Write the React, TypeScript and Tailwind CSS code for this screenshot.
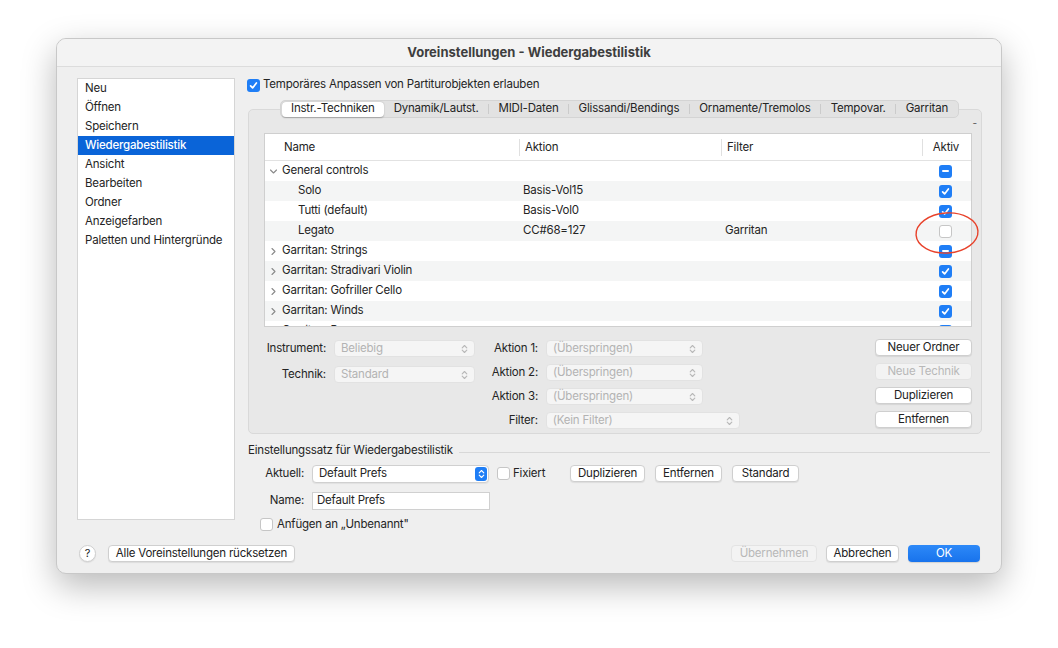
import React from "react";

type CheckState = "on" | "off" | "mixed";

function Check({ state }: { state: CheckState }) {
  if (state === "off")
    return <span className="block w-[13px] h-[13px] rounded-[3px] border border-[#c6c6c6] bg-white" />;
  return (
    <span className="flex w-[13px] h-[13px] rounded-[3px] bg-[#1f7ef6] items-center justify-center">
      {state === "on" ? (
        <svg width="11" height="11" viewBox="0 0 11 11">
          <path d="M2.6 5.8 L4.6 7.9 L8.4 3" fill="none" stroke="white" strokeWidth="1.7" strokeLinecap="round" strokeLinejoin="round" />
        </svg>
      ) : (
        <span className="block w-[7px] h-[2px] bg-white rounded-full" />
      )}
    </span>
  );
}

function Stepper({ color = "#b8b8b8" }: { color?: string }) {
  return (
    <svg width="7" height="10" viewBox="0 0 7 10">
      <path d="M1.2 3.8 L3.5 1.5 L5.8 3.8 M1.2 6.2 L3.5 8.5 L5.8 6.2" fill="none" stroke={color} strokeWidth="1.1" strokeLinecap="round" strokeLinejoin="round" />
    </svg>
  );
}

function Popup({ text, w }: { text: string; w: string }) {
  return (
    <div className={`flex items-center h-[17px] ${w} rounded-[4px] bg-[#f5f5f5] border border-[#e2e2e2] pl-[6px] pr-[6px] text-[#b3b3b3]`}>
      <span className="flex-1">{text}</span>
      <Stepper />
    </div>
  );
}

function Btn({ children, w, disabled }: { children: React.ReactNode; w: string; disabled?: boolean }) {
  return (
    <div
      className={`flex items-center justify-center whitespace-nowrap h-[17px] ${w} rounded-[4px] ${
        disabled
          ? "bg-[#f3f3f3] border border-[#e3e3e3] text-[#b8b8b8]"
          : "bg-white border border-[#cfcfcf] shadow-[0_1px_1px_rgba(0,0,0,0.08)] text-[#222]"
      }`}
    >
      {children}
    </div>
  );
}

const rows: { name: string; level: number; open?: boolean; aktion?: string; filter?: string; state: CheckState }[] = [
  { name: "General controls", level: 0, open: true, state: "mixed" },
  { name: "Solo", level: 1, aktion: "Basis-Vol15", state: "on" },
  { name: "Tutti (default)", level: 1, aktion: "Basis-Vol0", state: "on" },
  { name: "Legato", level: 1, aktion: "CC#68=127", filter: "Garritan", state: "off" },
  { name: "Garritan: Strings", level: 0, state: "mixed" },
  { name: "Garritan: Stradivari Violin", level: 0, state: "on" },
  { name: "Garritan: Gofriller Cello", level: 0, state: "on" },
  { name: "Garritan: Winds", level: 0, state: "on" },
  { name: "Garritan: Brass", level: 0, state: "on" },
];

const sidebar = ["Neu", "Öffnen", "Speichern", "Wiedergabestilistik", "Ansicht", "Bearbeiten", "Ordner", "Anzeigefarben", "Paletten und Hintergründe"];

const tabs = ["Instr.-Techniken", "Dynamik/Lautst.", "MIDI-Daten", "Glissandi/Bendings", "Ornamente/Tremolos", "Tempovar.", "Garritan"];

function Chevron({ open }: { open?: boolean }) {
  return open ? (
    <svg width="9" height="9" viewBox="0 0 9 9">
      <path d="M1.5 3 L4.5 6 L7.5 3" fill="none" stroke="#8a8a8a" strokeWidth="1.1" strokeLinecap="round" strokeLinejoin="round" />
    </svg>
  ) : (
    <svg width="9" height="9" viewBox="0 0 9 9">
      <path d="M3 1.5 L6 4.5 L3 7.5" fill="none" stroke="#8a8a8a" strokeWidth="1.1" strokeLinecap="round" strokeLinejoin="round" />
    </svg>
  );
}

const App = () => {
  return (
    <div className="w-[1058px] h-[648px] bg-white pt-[38px] pl-[56px] font-['Inter','Liberation_Sans',sans-serif] text-[11.5px] tracking-[-0.2px] text-[#242424] leading-none whitespace-nowrap">
      <div className="w-[946px] h-[536px] rounded-[10px] bg-[#efefef] border border-[#c8c8c8] shadow-[0_12px_34px_rgba(0,0,0,0.28)] overflow-hidden flex flex-col">
        {/* title bar */}
        <div className="h-[28px] shrink-0 flex items-center justify-center bg-[#f3f3f3] border-b border-[#dcdcdc] font-bold text-[13px] tracking-normal text-[#3e3e3e]">
          Voreinstellungen - Wiedergabestilistik
        </div>

        <div className="flex-1 flex flex-col pt-[11px] pl-[20px] pr-[11px]">
          <div className="h-[453px] flex gap-[12px]">
            {/* sidebar */}
            <div className="w-[158px] h-[442px] bg-white border border-[#d5d5d5] flex flex-col">
              {sidebar.map((s) => (
                <div
                  key={s}
                  className={`h-[19px] flex items-center pl-[7px] ${s === "Wiedergabestilistik" ? "bg-[#0a64d8] text-white font-medium" : ""}`}
                >
                  {s}
                </div>
              ))}
            </div>

            {/* right side */}
            <div className="w-[743px] flex flex-col">
              <div className="h-[14px] flex items-center gap-[3px]">
                <Check state="on" />
                <span>Temporäres Anpassen von Partiturobjekten erlauben</span>
              </div>

              {/* tab view */}
              <div className="mt-[8px] relative">
                <div className="relative z-10 flex justify-center pl-[2px]">
                  <div className="h-[18px] flex items-center rounded-[5px] bg-[#e2e2e2] border border-[#d4d4d4] p-[1px]">
                    {tabs.map((t, i) => (
                      <React.Fragment key={t}>
                        {i > 1 && <span className="w-px h-[10px] bg-[#cbcbcb]" />}
                        <div
                          className={`h-[15px] flex items-center px-[9.5px] ${
                            i === 0 ? "bg-white rounded-[4px] shadow-[0_0.5px_1.5px_rgba(0,0,0,0.25)]" : ""
                          }`}
                        >
                          {t}
                        </div>
                      </React.Fragment>
                    ))}
                  </div>
                </div>
                <div className="-mt-[9px] ml-[1px] w-[734px] h-[325px] bg-[#e8e8e8] border border-[#d9d9d9] rounded-[5px] pt-[23px] pl-[15px] relative">
                  <span className="absolute right-[4px] top-[8px] text-[10px] text-[#555]">-</span>
                  {/* table */}
                  <div className="relative w-[708px] h-[194px] bg-white border border-[#cfcfcf]">
                    <div className="h-[192px] overflow-hidden">
                      <div className="h-[27px] pt-[1px] flex items-center border-b border-[#e2e2e2]">
                        <div className="w-[254px] pl-[19px]">Name</div>
                        <span className="w-px h-[17px] bg-[#e0e0e0]" />
                        <div className="w-[201px] pl-[5px]">Aktion</div>
                        <span className="w-px h-[17px] bg-[#e0e0e0]" />
                        <div className="w-[200px] pl-[5px]">Filter</div>
                        <span className="w-px h-[17px] bg-[#e0e0e0]" />
                        <div className="flex-1 text-center pr-[2px]">Aktiv</div>
                      </div>
                      {rows.map((r, i) => (
                        <div key={r.name} className={`h-[20px] flex items-center ${i % 2 === 1 ? "bg-[#f4f5f5]" : "bg-white"}`}>
                          <div className={`w-[255px] flex items-center ${r.level === 1 ? "pl-[33px]" : "pl-[4px] gap-[4px]"}`}>
                            {r.level === 0 && <Chevron open={r.open} />}
                            <span>{r.name}</span>
                          </div>
                          <div className="w-[202px] pl-[3px]">{r.aktion}</div>
                          <div className="w-[202px] pl-[3px]">{r.filter}</div>
                          <div className="flex-1 flex justify-center pr-[4px]">
                            <Check state={r.state} />
                          </div>
                        </div>
                      ))}
                    </div>
                    {/* annotation ring */}
                    <svg className="absolute left-[648px] top-[75px] pointer-events-none" width="68" height="48" viewBox="0 0 68 48">
                      <ellipse cx="34" cy="24" rx="31" ry="20" transform="rotate(-4 34 24)" fill="none" stroke="#e8432c" strokeWidth="1.4" />
                    </svg>
                  </div>

                  {/* form */}
                  <div className="mt-[13px] flex">
                    <div className="w-[219px] -ml-[8px] flex flex-col gap-[9px]">
                      <div className="flex items-center justify-end gap-[8px]">
                        <span>Instrument:</span>
                        <Popup text="Beliebig" w="w-[141px]" />
                      </div>
                      <div className="flex items-center justify-end gap-[8px]">
                        <span>Technik:</span>
                        <Popup text="Standard" w="w-[141px]" />
                      </div>
                    </div>
                    <div className="w-[265px] flex flex-col gap-[7px]">
                      {["Aktion 1:", "Aktion 2:", "Aktion 3:"].map((a) => (
                        <div key={a} className="flex items-center">
                          <span className="w-[63px] text-right">{a}</span>
                          <span className="w-[8px]" />
                          <Popup text="(Überspringen)" w="w-[157px]" />
                        </div>
                      ))}
                      <div className="flex items-center">
                        <span className="w-[63px] text-right">Filter:</span>
                        <span className="w-[8px]" />
                        <Popup text="(Kein Filter)" w="w-[195px]" />
                      </div>
                    </div>
                    <div className="ml-[135px] -mt-[1px] flex flex-col gap-[7px]">
                      <Btn w="w-[97px]">Neuer Ordner</Btn>
                      <Btn w="w-[97px]" disabled>
                        Neue Technik
                      </Btn>
                      <Btn w="w-[97px]">Duplizieren</Btn>
                      <Btn w="w-[97px]">Entfernen</Btn>
                    </div>
                  </div>
                </div>
              </div>

              {/* Einstellungssatz group */}
              <div className="mt-[11px] h-[12px] flex items-center gap-[6px] pl-[1px]">
                <span>Einstellungssatz für Wiedergabestilistik</span>
                <span className="flex-1 h-px bg-[#d8d8d8] mt-[2px]" />
              </div>
              <div className="mt-[8px] flex items-center h-[17px]">
                <span className="w-[57px] text-right">Aktuell:</span>
                <span className="w-[8px]" />
                <div className="w-[177px] h-[18px] flex items-center bg-white border border-[#d0d0d0] rounded-[4px] pl-[6px] pr-[1px] shadow-[0_1px_1px_rgba(0,0,0,0.06)]">
                  <span className="flex-1">Default Prefs</span>
                  <span className="w-[12px] h-[14px] rounded-[3px] bg-[#1f7ef6] flex items-center justify-center">
                    <Stepper color="#ffffff" />
                  </span>
                </div>
                <span className="w-[8px]" />
                <Check state="off" />
                <span className="ml-[3px] w-[57px]">Fixiert</span>
                <div className="flex gap-[10px]">
                  <Btn w="w-[75px]">Duplizieren</Btn>
                  <Btn w="w-[67px]">Entfernen</Btn>
                  <Btn w="w-[67px]">Standard</Btn>
                </div>
              </div>
              <div className="mt-[10px] flex items-center h-[17px]">
                <span className="w-[57px] text-right">Name:</span>
                <span className="w-[8px]" />
                <div className="w-[178px] h-[18px] flex items-center bg-white border border-[#d0d0d0] pl-[4px]">Default Prefs</div>
              </div>
              <div className="mt-[9px] flex items-center h-[13px] pl-[13px] gap-[4px]">
                <Check state="off" />
                <span>Anfügen an „Unbenannt"</span>
              </div>
            </div>
          </div>

          {/* bottom buttons */}
          <div className="mt-[14px] flex items-center h-[17px] pl-[2px] pr-[10px]">
            <div className="w-[17px] h-[17px] rounded-full bg-white border border-[#cfcfcf] shadow-[0_1px_1px_rgba(0,0,0,0.08)] flex items-center justify-center text-[11px]">
              ?
            </div>
            <span className="w-[12px]" />
            <Btn w="w-[187px]">Alle Voreinstellungen rücksetzen</Btn>
            <span className="flex-1" />
            <div className="flex gap-[9px]">
              <Btn w="w-[86px]" disabled>
                Übernehmen
              </Btn>
              <Btn w="w-[73px]">Abbrechen</Btn>
              <div className="w-[72px] h-[17px] rounded-[4px] bg-[linear-gradient(#2d89f8,#1873ec)] text-white flex items-center justify-center shadow-[0_1px_1px_rgba(0,0,0,0.12)]">
                OK
              </div>
            </div>
          </div>
        </div>
      </div>
    </div>
  );
};

export default App;
